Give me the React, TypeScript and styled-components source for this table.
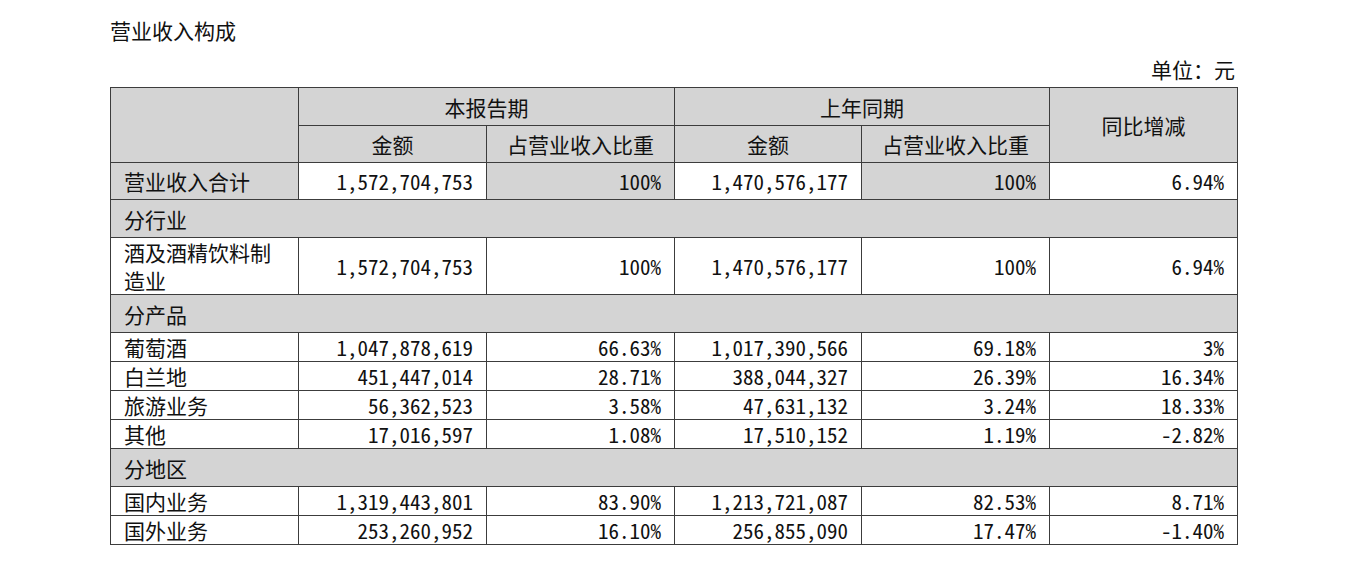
import React from 'react';
import styled, { createGlobalStyle } from 'styled-components';

const GlobalStyle = createGlobalStyle`
  html, body {
    margin: 0;
    padding: 0;
    background: #ffffff;
  }
  body {
    font-family: "Noto Sans CJK SC", "Liberation Sans", sans-serif;
    color: #111;
  }
`;

type RowKind = 'total' | 'section' | 'item' | 'tall';

interface DataRow {
  kind: RowKind;
  label: string;
  values?: string[];
}

const rows: DataRow[] = [
  { kind: 'total', label: '营业收入合计', values: ['1,572,704,753', '100%', '1,470,576,177', '100%', '6.94%'] },
  { kind: 'section', label: '分行业' },
  { kind: 'tall', label: '酒及酒精饮料制造业', values: ['1,572,704,753', '100%', '1,470,576,177', '100%', '6.94%'] },
  { kind: 'section', label: '分产品' },
  { kind: 'item', label: '葡萄酒', values: ['1,047,878,619', '66.63%', '1,017,390,566', '69.18%', '3%'] },
  { kind: 'item', label: '白兰地', values: ['451,447,014', '28.71%', '388,044,327', '26.39%', '16.34%'] },
  { kind: 'item', label: '旅游业务', values: ['56,362,523', '3.58%', '47,631,132', '3.24%', '18.33%'] },
  { kind: 'item', label: '其他', values: ['17,016,597', '1.08%', '17,510,152', '1.19%', '-2.82%'] },
  { kind: 'section', label: '分地区' },
  { kind: 'item', label: '国内业务', values: ['1,319,443,801', '83.90%', '1,213,721,087', '82.53%', '8.71%'] },
  { kind: 'item', label: '国外业务', values: ['253,260,952', '16.10%', '256,855,090', '17.47%', '-1.40%'] },
];

const rowHeight: Record<RowKind, number> = {
  total: 37,
  section: 38,
  tall: 57,
  item: 28,
};

// 页面容器
const Page = styled.div`
  width: 1127px;
  padding: 16px 0 0 110px;
  font-size: 21px;
  font-feature-settings: "hwid" 1;
`;

const Title = styled.div`
  line-height: 28px;
  height: 28px;
`;

const Unit = styled.div`
  margin-top: 11px;
  line-height: 28px;
  height: 28px;
  text-align: right;
  padding-right: 2px;
  margin-bottom: 4px;
`;

const Table = styled.table`
  width: 1127px;
  table-layout: fixed;
  border-collapse: collapse;
  border: 1px solid #3c3c3c;
`;

const HeadCell = styled.th<{ $h?: number }>`
  height: ${p => p.$h ?? 36}px;
  padding: 0;
  background: #d4d4d4;
  border: 1px solid #3c3c3c;
  font-weight: 400;
  text-align: center;
  vertical-align: middle;
  line-height: 28px;
`;

const Row = styled.tr<{ $h: number }>`
  height: ${p => p.$h}px;
`;

const LabelCell = styled.td<{ $shade?: boolean }>`
  padding: 0 13px;
  background: ${p => (p.$shade ? '#d4d4d4' : '#ffffff')};
  border: 1px solid #3c3c3c;
  line-height: 28px;
  vertical-align: middle;
  text-align: left;
`;

const NumCell = styled.td<{ $shade?: boolean }>`
  padding: 0 13px;
  background: ${p => (p.$shade ? '#d4d4d4' : '#ffffff')};
  border: 1px solid #3c3c3c;
  line-height: 28px;
  vertical-align: middle;
  text-align: right;
  white-space: nowrap;
`;

const App: React.FC = () => {
  return (
    <Page>
      <GlobalStyle />
      <Title>营业收入构成</Title>
      <Unit>单位：元</Unit>
      <Table>
        <colgroup>
          <col style={{ width: 188 }} />
          <col style={{ width: 188 }} />
          <col style={{ width: 188 }} />
          <col style={{ width: 187 }} />
          <col style={{ width: 188 }} />
          <col style={{ width: 188 }} />
        </colgroup>
        <thead>
          <tr>
            <HeadCell rowSpan={2} />
            <HeadCell colSpan={2} $h={37}>本报告期</HeadCell>
            <HeadCell colSpan={2} $h={37}>上年同期</HeadCell>
            <HeadCell rowSpan={2}>同比增减</HeadCell>
          </tr>
          <tr>
            <HeadCell>金额</HeadCell>
            <HeadCell>占营业收入比重</HeadCell>
            <HeadCell>金额</HeadCell>
            <HeadCell>占营业收入比重</HeadCell>
          </tr>
        </thead>
        <tbody>
          {rows.map(row =>
            row.kind === 'section' ? (
              <Row key={row.label} $h={rowHeight.section}>
                <LabelCell $shade colSpan={6}>{row.label}</LabelCell>
              </Row>
            ) : (
              <Row key={row.label} $h={rowHeight[row.kind]}>
                <LabelCell $shade={row.kind === 'total'}>{row.label}</LabelCell>
                {row.values!.map((v, i) => (
                  <NumCell key={i} $shade={row.kind === 'total' && (i === 1 || i === 3)}>
                    {v}
                  </NumCell>
                ))}
              </Row>
            )
          )}
        </tbody>
      </Table>
    </Page>
  );
};

export default App;
